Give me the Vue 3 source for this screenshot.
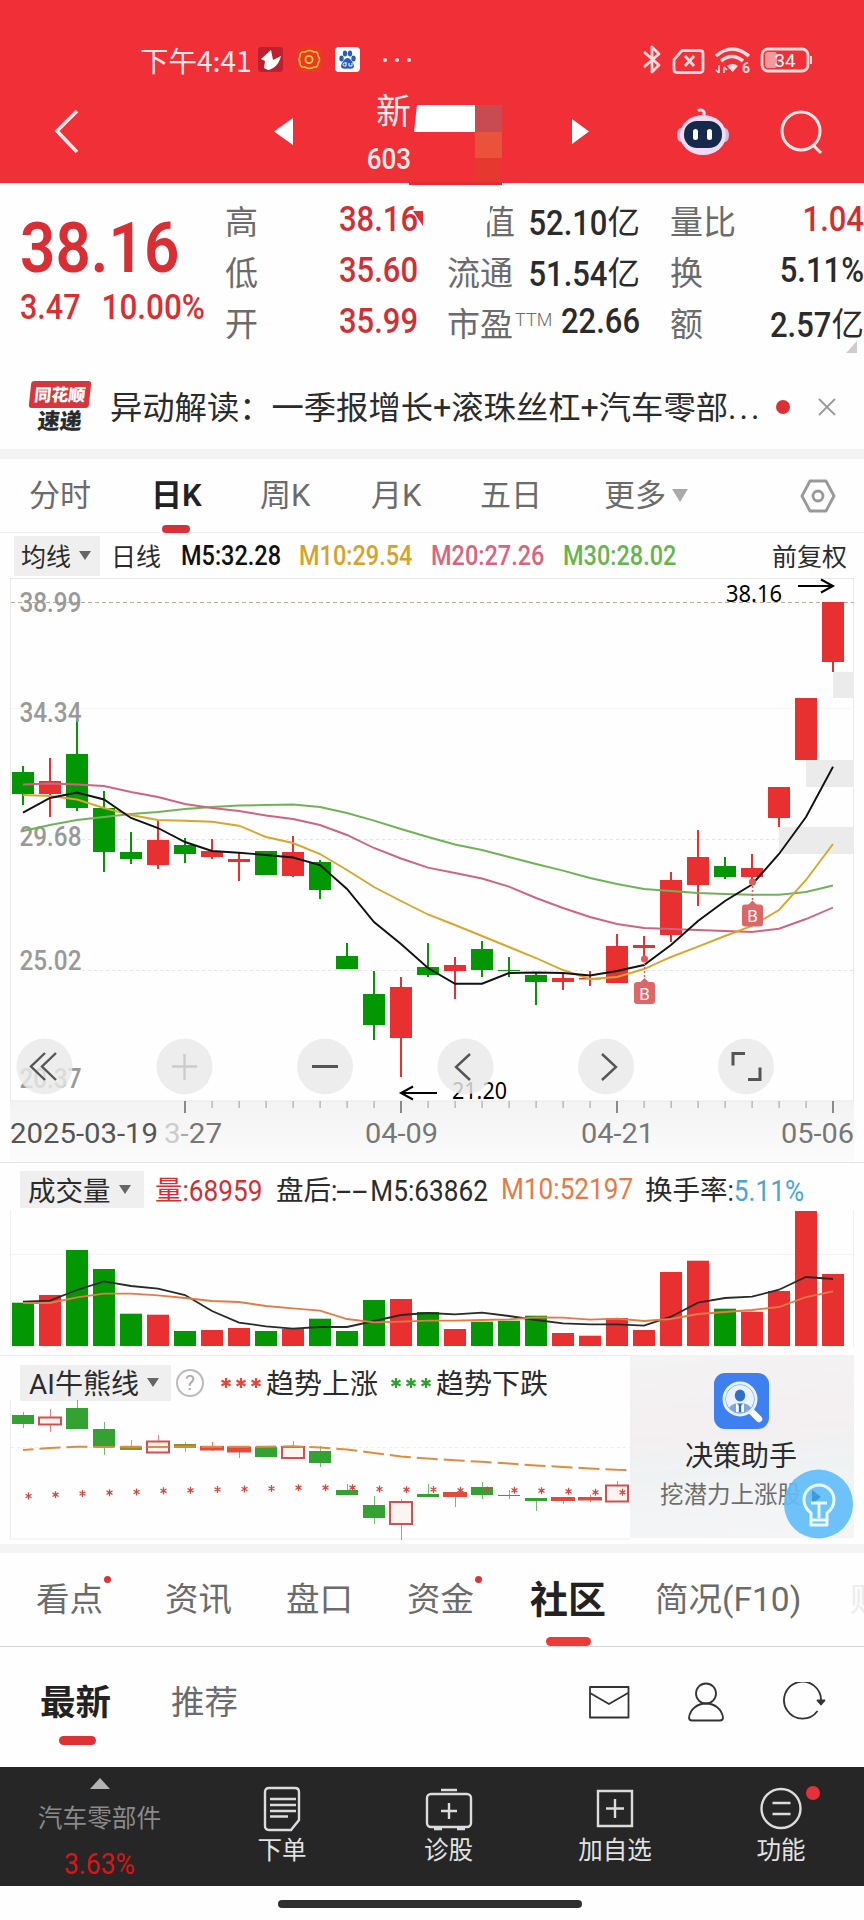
<script setup>
import { ref, computed } from 'vue'

const RED = '#e83030'
const GREEN = '#039803'

const periods = ['分时', '日K', '周K', '月K', '五日', '更多']
const activePeriod = ref('日K')

const sections = [
  { name: '看点', dot: true },
  { name: '资讯' },
  { name: '盘口' },
  { name: '资金', dot: true },
  { name: '社区' },
  { name: '简况(F10)' },
  { name: '财' },
]
const activeSection = ref('社区')

// x of the candle with index i
const cx = (i) => 23 + 27 * i

// [up, bodyTop, bodyBottom, high, low]
const candles = [
  [0, 772, 794, 766, 805], [1, 781, 794, 758, 817], [0, 754, 808, 720, 811],
  [0, 808, 852, 791, 872], [0, 852, 859, 832, 864], [1, 840, 865, 821, 869],
  [0, 845, 854, 838, 863], [1, 851, 857, 839, 859], [1, 859, 862, 853, 881],
  [0, 851, 875, 851, 875], [1, 852, 876, 836, 877], [0, 862, 890, 860, 899],
  [0, 956, 969, 943, 969], [0, 994, 1025, 971, 1040], [1, 987, 1038, 977, 1077],
  [0, 967, 975, 943, 977], [1, 965, 971, 957, 999], [0, 949, 970, 941, 977],
  [0, 970, 971, 957, 977], [0, 975, 982, 973, 1005], [1, 978, 982, 973, 990],
  [1, 978, 979.5, 971, 986], [1, 946, 983, 934, 983], [1, 945, 948, 936, 959],
  [1, 880, 935, 872, 942], [1, 857, 885, 830, 906], [0, 866, 877, 857, 879],
  [1, 868, 877, 854, 883], [1, 787, 818, 787, 827], [1, 698, 760, 698, 760],
  [1, 602, 662, 602, 672],
]

const toPoints = (ys) => ys.map((y, i) => `${cx(i)},${y}`).join(' ')

const averages = [
  { color: '#6fb356', ys: [831, 825, 820, 817, 814, 812, 809, 807, 805.5, 805, 804.5, 807, 813, 820.7, 829, 837, 844.5, 850, 857, 864, 870.7, 878, 884, 889, 891, 893, 894, 894.7, 894.7, 892, 885.5] },
  { color: '#cf6480', ys: [784.5, 783.5, 784.5, 786, 792, 797, 804, 808, 811, 815.5, 819, 825, 835, 848, 858.5, 867.7, 873, 878.5, 886.7, 898, 908, 917, 924, 928, 929, 930, 931, 932, 928.7, 919, 907.5] },
  { color: '#d8a62c', ys: [795, 796, 799.5, 808, 815, 820, 820.7, 821.7, 825.7, 837, 843, 854, 870, 887, 901, 914.5, 925, 936, 947, 958, 970, 979, 977, 969, 957, 946.7, 936, 926, 910, 880, 844] },
  { color: '#111', ys: [812.7, 798, 792.5, 799.5, 818, 828, 842, 851, 852.7, 855, 857.5, 865, 889, 922, 944, 968, 983.7, 983.7, 973, 972.5, 973, 975.5, 971, 965, 945, 921, 901, 884.5, 854, 817, 766.7] },
]

const priceLabels = [
  ['38.99', 611.5], ['34.34', 722], ['29.68', 846], ['25.02', 970], ['20.37', 1088],
]

const ticks = computed(() => {
  const list = []
  for (let i = 6; i <= 30; i++) list.push({ x: cx(i), major: [6, 14, 22, 30].includes(i) })
  return list
})

// volume bar tops, coloured like the candle of the same day
const volumes = [1302.7, 1295, 1250, 1269, 1313.7, 1314.7, 1331, 1330, 1328, 1331, 1328.7, 1318.7, 1331, 1300, 1299, 1312, 1329, 1321.7, 1320.7, 1315.7, 1333, 1335.7, 1318, 1330, 1272, 1260.7, 1308.7, 1311.7, 1291, 1211, 1274]
const volM5 = [1301.7, 1300.7, 1290, 1281.3, 1286, 1288.7, 1295, 1311, 1322.7, 1326.3, 1328.7, 1327, 1327, 1321, 1315, 1313, 1314.3, 1312.7, 1316, 1320, 1323.3, 1324.3, 1324.3, 1325.7, 1316.7, 1302.7, 1298, 1296.7, 1289.7, 1277, 1279]
const volM10 = [1303, 1303, 1297.3, 1293.7, 1293.7, 1295.3, 1298, 1301, 1302, 1306, 1308.3, 1310.7, 1319, 1322.3, 1321.7, 1320.7, 1320.7, 1320, 1319.3, 1317.3, 1317.7, 1319.7, 1318.7, 1321, 1319, 1314, 1312, 1310, 1307, 1297, 1291.3]

// [type, top, bottom, high, low]
const aiCandles = [
  ['g', 1415, 1424, 1412, 1428], ['h', 1417.5, 1424.5, 1409, 1432], ['g', 1408, 1429, 1400, 1429],
  ['g', 1429, 1447, 1422, 1455], ['o', 1446.5, 1450, 1440, 1450], ['h', 1441.5, 1452.5, 1435, 1453],
  ['o', 1444, 1448, 1442, 1452], ['r', 1446, 1450.5, 1442, 1451], ['r', 1446.5, 1452.5, 1446, 1458],
  ['g', 1447, 1457, 1447, 1457], ['h', 1447, 1458, 1441, 1458], ['g', 1451, 1463, 1446, 1467],
  ['g', 1490, 1495, 1484, 1495], ['g', 1505, 1518, 1496, 1524], ['h', 1502, 1524, 1499, 1540],
  ['g', 1494, 1497, 1484, 1497], ['r', 1492, 1497, 1492, 1507], ['g', 1487, 1495, 1482, 1499],
  ['g', 1495, 1496, 1490, 1499], ['g', 1498, 1501, 1498, 1511], ['r', 1497, 1501, 1497, 1504],
  ['r', 1497, 1500.5, 1495, 1502], ['h', 1485.5, 1501.5, 1481, 1502],
]
const aiColors = { g: '#33a233', r: '#df4c3c', h: '#d0504f', o: '#8f8f28' }
const trend = [1450, 1448, 1446.7, 1447, 1446.7, 1447, 1446.7, 1446.7, 1446.7, 1446.7, 1446.3, 1447.5, 1449.5, 1453, 1456.5, 1458.5, 1460.3, 1461.8, 1463.5, 1465.5, 1467, 1468.5, 1469.8]
const stars = [1496, 1494.7, 1493.5, 1492.7, 1492, 1490.8, 1490.3, 1489.5, 1489, 1488.5, 1487.7, 1487.7, 1487.7, 1489, 1489.7, 1489.5, 1490.3, 1490, 1490.3, 1490.7, 1491.3, 1492.3, 1492.3]
</script>

<template>
  <div class="page">
    <header class="header">
      <div class="status">
        <span class="time">下午4:41</span>
        <svg class="app-icon" viewBox="0 0 25 25">
          <rect width="25" height="25" rx="3" fill="#bd2130" />
          <path d="M13 3 3 12l4 2-1 7 4 2c6-1 11-6 13-14l-8 4z" fill="#fff" />
        </svg>
        <svg class="app-icon" viewBox="0 0 25 25">
          <rect width="25" height="25" rx="3" fill="#ec3a1c" />
          <path d="M3 9c0-3 2-5 5-4 3-2 6-2 9 0 3-1 4 1 4 4 2 2 2 5 0 7 0 3-1 5-4 4-3 2-6 2-9 0-3 1-5-1-5-4-1-2-1-5 0-7z" fill="none" stroke="#f2c94c" stroke-width="1.600" />
          <circle cx="12" cy="12.500" r="3.600" fill="none" stroke="#f2c94c" stroke-width="1.800" />
        </svg>
        <svg class="app-icon" viewBox="0 0 25 25">
          <rect width="25" height="25" rx="4" fill="#fff" />
          <g fill="#2a5db8">
            <ellipse cx="6.500" cy="11.500" rx="2.200" ry="3" />
            <ellipse cx="10" cy="6.500" rx="2.200" ry="3" />
            <ellipse cx="15" cy="6.500" rx="2.200" ry="3" />
            <ellipse cx="18.500" cy="11.500" rx="2.200" ry="3" />
            <path d="M12.500 11c3 0 6 5 6.500 8 0 3-3 3-6.500 2.500C9 22 6 22 6 19c.5-3 3.500-8 6.500-8z" />
          </g>
          <path d="M11 15v4h-1.500a1.500 1.500 0 0 1 0-3H11M14 16v3h3v-3" fill="none" stroke="#fff" />
        </svg>
        <i class="dots"><b></b><b></b><b></b></i>
        <svg class="status-right" width="170" height="32" viewBox="642 44 170 32" fill="none" stroke="#fbdcdc" stroke-width="2.800">
          <path d="M644 52l15 13-7 7V47l7 7-15 13" stroke-linejoin="round" />
          <path d="M682 50.500h18q3 0 3 3v16q0 3-3 3h-23q-3 0-3-3v-10z" />
          <path d="M685 56l9 10m0-10-9 10" />
          <path d="M716 56q16-14 33 0M721 61q11-9 22 0" stroke-width="3.600" />
          <path d="M727 66q6-4 11 0l-5.500 6z" fill="#fbdcdc" stroke="none" />
          <path d="M719 65v8m-3-3 3 3M724 73v-6m3 3-3-3" stroke-width="1.600" />
          <text x="742" y="73" font-size="14" font-weight="700" fill="#fbdcdc" stroke="none">6</text>
          <rect x="762" y="49" width="46" height="22" rx="6" />
          <rect x="765" y="52" width="12" height="16" rx="3" fill="#f59a9c" stroke="none" />
          <path d="M811.500 56v8" />
          <text x="785" y="67" font-size="19" text-anchor="middle" fill="#fff" stroke="none" textLength="21" lengthAdjust="spacingAndGlyphs">34</text>
        </svg>
      </div>
      <nav class="nav">
        <svg class="back" width="30" height="46" viewBox="0 0 30 46"><path d="M26 2 6 22l20 21" fill="none" stroke="#fde8e8" stroke-width="3.600" /></svg>
        <svg class="arrow" width="20" height="28" viewBox="0 0 20 28"><path d="M19 0v27L0 13.500z" fill="#fff" /></svg>
        <div class="title">
          <div class="title-text">
            <span class="name">新</span>
            <span class="n code">603</span>
          </div>
          <svg class="mosaic" width="93" height="101" viewBox="409 84 93 101">
            <path d="M417 105h58v27h-61z" fill="#fff" />
            <rect x="475" y="105" width="27" height="27" fill="#c94b52" />
            <rect x="475" y="132" width="27" height="26" fill="#e9523b" />
            <rect x="475" y="158" width="27" height="25" fill="#e73830" />
            <rect x="409" y="182" width="93" height="3" fill="#df2f33" />
          </svg>
        </div>
        <svg class="arrow" width="20" height="28" viewBox="0 0 20 28"><path d="M0 1v25l17-12.500z" fill="#fff" /></svg>
        <svg class="robot" width="54" height="50" viewBox="0 0 54 50">
          <path d="M26 9c4-4-2-8-5-5" fill="none" stroke="#f3e3f5" stroke-width="3" />
          <ellipse cx="4" cy="28" rx="4" ry="7" fill="#cdbbe0" />
          <ellipse cx="48" cy="28" rx="4" ry="7" fill="#cdbbe0" />
          <ellipse cx="26" cy="28" rx="23" ry="20" fill="#eedcf3" />
          <rect x="7" y="14" width="38" height="27" rx="13" fill="#17294b" />
          <rect x="16" y="22" width="5" height="11" rx="2.500" fill="#fff" />
          <rect x="30" y="22" width="5" height="11" rx="2.500" fill="#fff" />
        </svg>
        <svg width="44" height="46" viewBox="0 0 44 46" fill="none" stroke="#fde8e8" stroke-width="3">
          <circle cx="22" cy="22" r="19" />
          <path d="M34 36l8 8" />
        </svg>
      </nav>
    </header>

    <section class="quote">
      <div class="price">
        <div class="n last">38.16</div>
        <div class="change"><span class="n">3.47</span><span class="n pct">10.00%</span></div>
      </div>
      <div class="stats">
        <div class="stat"><span>高</span><b class="n red">38.16</b></div>
        <div class="stat"><span>低</span><b class="n red">35.60</b></div>
        <div class="stat"><span>开</span><b class="n red">35.99</b></div>
      </div>
      <div class="stats">
        <div class="stat"><svg class="chip" width="11" height="16" viewBox="0 0 11 16"><path d="M0 1h10v15z" fill="#d92f35" /></svg><span class="cut">值</span><div><b class="n">52.10</b><em>亿</em></div></div>
        <div class="stat"><span>流通</span><div><b class="n">51.54</b><em>亿</em></div></div>
        <div class="stat"><span>市盈<sup>TTM</sup></span><b class="n">22.66</b></div>
      </div>
      <div class="stats">
        <div class="stat"><span>量比</span><b class="n red">1.04</b></div>
        <div class="stat"><span>换</span><b class="n">5.11%</b></div>
        <div class="stat"><span>额</span><div><b class="n">2.57</b><em>亿</em></div></div>
        <i class="corner"></i>
      </div>
    </section>

    <section class="notice">
      <div class="logo">
        <div class="logo-top">同花顺</div>
        <div class="logo-bottom">速递</div>
      </div>
      <span class="notice-text">异动解读：一季报增长+滚珠丝杠+汽车零部<span class="more">...</span></span>
      <i class="notice-dot"></i>
      <svg width="20" height="18" viewBox="0 0 20 18"><path d="M2 1l16 16M18 1 2 17" stroke="#999" stroke-width="1.800" /></svg>
    </section>

    <nav class="periods">
      <span v-for="p in periods" :key="p" :class="{ on: p === activePeriod }" @click="activePeriod = p">{{ p }}<i v-if="p === '更多'" class="caret"></i></span>
      <svg width="36" height="34" viewBox="0 0 36 34" fill="none" stroke="#999" stroke-width="2.800">
        <path d="M10 2h16l8 15-8 15H10L2 17z" stroke-linejoin="round" />
        <circle cx="18" cy="17" r="5" />
      </svg>
    </nav>

    <div class="ma">
      <span class="select">均线<i class="caret dark"></i></span>
      <span class="ma-day">日线</span>
      <b class="n m5">M5:32.28</b>
      <b class="n m10">M10:29.54</b>
      <b class="n m20">M20:27.26</b>
      <b class="n m30">M30:28.02</b>
      <span class="adjust">前复权</span>
    </div>

    <svg class="chart" width="864" height="584" viewBox="0 578 864 584">
      <defs>
        <linearGradient id="axisBg" x1="0" y1="0" x2="0" y2="1">
          <stop offset="0" stop-color="#f3f3f3" />
          <stop offset="1" stop-color="#fbfbfb" />
        </linearGradient>
      </defs>
      <rect x="10" y="1101" width="844" height="61" fill="url(#axisBg)" />
      <rect x="10.500" y="578.500" width="843" height="522.500" fill="#fefefe" stroke="#e9e9e9" />
      <path d="M11 602.500h843" stroke="#b9ab98" stroke-dasharray="4 3" />
      <path d="M11 708.500h843" stroke="#f6f6f6" />
      <path d="M82 839.500h772M82 970.500h772" stroke="#e4e4e4" stroke-dasharray="3 3" />
      <g fill="#ebebeb">
        <rect x="833" y="672" width="21" height="26" />
        <rect x="806" y="760" width="48" height="27" />
        <rect x="779" y="827" width="75" height="27" />
      </g>
      <g v-for="(c, i) in candles" :key="i" :fill="c[0] ? RED : GREEN">
        <rect :x="cx(i) - 1" :y="c[3]" width="2" :height="c[4] - c[3]" />
        <rect :x="cx(i) - 11" :y="c[1]" width="22" :height="c[2] - c[1]" />
      </g>
      <text v-for="l in priceLabels" :key="l[0]" class="axis" x="19.500" :y="l[1]" textLength="62" lengthAdjust="spacingAndGlyphs">{{ l[0] }}</text>
      <polyline v-for="a in averages" :key="a.color" :points="toPoints(a.ys)" fill="none" :stroke="a.color" stroke-width="1.900" />

      <g v-for="m in [[644.5, 959, 982], [752.5, 882, 904.5]]" :key="m[0]">
        <circle :cx="m[0]" :cy="m[1]" r="3.500" fill="#de5b5b" />
        <path :d="`M${m[0]} ${m[1]}V${m[2]}`" stroke="#de5b5b" stroke-width="1.500" stroke-dasharray="2 2" />
        <path :d="`M${m[0] - 5} ${m[2] + 1}l5-5 5 5z`" fill="#dd6666" />
        <rect :x="m[0] - 10.500" :y="m[2]" width="21" height="22" rx="3" fill="#dd6666" />
        <text :x="m[0]" :y="m[2] + 17.500" class="mark">B</text>
      </g>

      <text x="726" y="602" class="tip" textLength="56" lengthAdjust="spacingAndGlyphs">38.16</text>
      <path d="M798 586h34M821 579.500l12 6.500-12 6.500" fill="none" stroke="#000" stroke-width="2" />
      <text x="452" y="1099" class="tip" textLength="55" lengthAdjust="spacingAndGlyphs">21.20</text>
      <path d="M437 1093h-35M413 1086.500l-12 6.500 12 6.500" fill="none" stroke="#000" stroke-width="2" />

      <circle v-for="x in [44.5, 184.5, 325, 465.5, 606, 746]" :key="x" :cx="x" cy="1066.500" r="28" fill="#e9e9e9" fill-opacity=".82" />
      <g fill="none" stroke="#555" stroke-width="2.400">
        <path d="M45 1053l-14 13.500 14 13.500M56 1053l-14 13.500 14 13.500" />
        <path d="M172 1066.500h25M184.500 1054v26" stroke="#ccc" />
        <path d="M312 1066.500h26" stroke-width="3" />
        <path d="M470 1054l-14 13 14 13M602 1054l14 13-14 13" />
        <path d="M745 1053.500h-12v12M748 1079.500h12v-12" stroke-width="3" />
      </g>

      <g v-for="t in ticks" :key="t.x">
        <rect :x="t.x - (t.major ? 1 : 0.5)" y="1101" :width="t.major ? 2 : 1.2" :height="t.major ? 12 : 7" :fill="t.major ? '#8a8a8a' : '#aaa'" />
      </g>
      <g class="date">
        <text x="10" y="1142.500" textLength="148" lengthAdjust="spacingAndGlyphs" fill="#555">2025-03-19</text>
        <text x="164" y="1142.500" textLength="58" lengthAdjust="spacingAndGlyphs"><tspan fill="#ccc">3</tspan><tspan fill="#aaa">-</tspan>27</text>
        <text x="365" y="1142.500" textLength="73" lengthAdjust="spacingAndGlyphs">04-09</text>
        <text x="581" y="1142.500" textLength="73" lengthAdjust="spacingAndGlyphs">04-21</text>
        <text x="781" y="1142.500" textLength="73" lengthAdjust="spacingAndGlyphs">05-06</text>
      </g>
    </svg>

    <section class="volume">
      <div class="volume-head">
        <span class="select">成交量<i class="caret dark"></i></span>
        <span class="v1">量<b class="n">:68959</b></span>
        <span class="v2">盘后<b class="n">:<s>--</s>M5:63862</b></span>
        <span class="v3"><b class="n">M10:52197</b></span>
        <span>换手率<b class="n">:<u>5.11%</u></b></span>
      </div>
      <svg width="864" height="138" viewBox="0 1210 864 138">
        <path d="M11 1254.500h843" stroke="#f3f3f3" />
        <path d="M10.500 1210v137M853.500 1210v137" stroke="#efefef" />
        <rect v-for="(v, i) in volumes" :key="i" :x="cx(i) - 11" :y="v" width="22" :height="1346 - v" :fill="candles[i][0] ? RED : GREEN" />
        <polyline :points="toPoints(volM5)" fill="none" stroke="#2a2a2a" stroke-width="1.800" />
        <polyline :points="toPoints(volM10)" fill="none" stroke="#e57a45" stroke-width="1.800" />
      </svg>
    </section>

    <section class="ai">
      <div class="ai-chart">
        <div class="ai-head">
          <span class="select">AI牛熊线<i class="caret dark"></i></span>
          <span class="help">?</span>
          <svg width="42" height="14" viewBox="0 0 42 14" stroke="#df4a3c" stroke-width="2.200"><path v-for="k in [6, 21, 36]" :key="k" :d="`M${k} 2v10M${k - 4.500} 4.500l9 5M${k + 4.500} 4.500l-9 5`" /></svg>
          <span class="up">趋势上涨</span>
          <svg width="42" height="14" viewBox="0 0 42 14" stroke="#2fa02f" stroke-width="2.200"><path v-for="k in [6, 21, 36]" :key="k" :d="`M${k} 2v10M${k - 4.500} 4.500l9 5M${k + 4.500} 4.500l-9 5`" /></svg>
          <span class="down">趋势下跌</span>
        </div>
        <svg class="ai-svg" width="630" height="144" viewBox="0 1400 630 144">
          <path d="M10.500 1400v139h620" stroke="#ececec" fill="none" />
          <path d="M11 1447.500h621" stroke="#ededed" stroke-dasharray="3 3" />
          <g v-for="(c, i) in aiCandles" :key="i">
            <rect :x="cx(i)" :y="c[3]" width="1" :height="c[4] - c[3]" :fill="aiColors[c[0]]" opacity=".7" />
            <rect v-if="c[0] === 'h'" :x="cx(i) - 11" :y="c[1]" width="22" :height="c[2] - c[1]" fill="#fbf4f1" :stroke="aiColors.h" stroke-width="2" />
            <rect v-else :x="cx(i) - (c[0] === 'r' ? 12 : 11)" :y="c[1]" :width="c[0] === 'r' ? 24 : 22" :height="c[2] - c[1]" :fill="aiColors[c[0]]" />
          </g>
          <polyline :points="toPoints(trend) + ' 630,1470'" fill="none" stroke="#e08c3c" stroke-width="2" stroke-dasharray="21 6" stroke-dashoffset="10.500" />
          <path v-for="(y, i) in stars" :key="i" :d="`M${cx(i) + 5.500} ${y - 3.500}v7M${cx(i) + 2.500} ${y - 1.800}l6 3.600M${cx(i) + 8.500} ${y - 1.800}l-6 3.600`" stroke="#d24a45" stroke-width="1.300" />
        </svg>
      </div>
      <aside class="helper">
        <svg width="55" height="56" viewBox="0 0 55 56">
          <rect width="55" height="56" rx="11" fill="#3f80f1" />
          <path d="M38 39l7 7" stroke="#fff" stroke-width="6.500" stroke-linecap="round" />
          <circle cx="26" cy="26" r="16" fill="#4f8df3" stroke="#e8f3ff" stroke-width="3" />
          <circle cx="26" cy="26" r="14" fill="#e9f3ff" />
          <path d="M15 35q3-5 11-5t11 5q-5 5-11 5t-11-5z" fill="#7fa6d8" />
          <ellipse cx="26" cy="22.500" rx="5.200" ry="6" fill="#2d6fc9" />
          <path d="M22 30l4 4 4-4v9h-8z" fill="#fff" />
          <path d="M26 31v8" stroke="#2d6fc9" stroke-width="2.400" />
        </svg>
        <strong>决策助手</strong>
        <small>挖潜力上涨股</small>
        <svg class="bulb" width="69" height="70" viewBox="0 0 69 70">
          <circle cx="34.500" cy="35" r="34.500" fill="#62bdf9" fill-opacity=".93" />
          <path d="M28 21l9 7-9 7z" fill="#3c9ad8" />
          <path d="M27 56V44c-4-3-7-8-7-13a15 15 0 0 1 30 0c0 5-3 10-7 13v12zM27 51h16" fill="none" stroke="#eafaff" stroke-width="3" stroke-linejoin="round" />
          <path d="M27 34h16M35 34v15" stroke="#eafaff" stroke-width="3" />
        </svg>
      </aside>
    </section>

    <nav class="sections">
      <span v-for="s in sections" :key="s.name" :class="{ on: s.name === activeSection }" @click="activeSection = s.name">{{ s.name }}<i v-if="s.dot" class="badge"></i></span>
    </nav>

    <div class="feed">
      <span class="on">最新</span>
      <span>推荐</span>
      <svg width="42" height="40" viewBox="588 1682 42 40"><path d="M590 1687h38.500v30.500H590zM590 1693l19 11 19-11" /></svg>
      <svg width="38" height="40" viewBox="688 1682 38 40"><ellipse cx="706" cy="1693.500" rx="10" ry="10" /><path d="M706 1703.500c-9 0-16 6-17 14q0 3 3 3h28q3 0 3-3c-1-8-8-14-17-14z" /></svg>
      <svg width="44" height="40" viewBox="782 1682 44 40"><path d="M817.500 1711a18.500 18.500 0 1 1 3.500-10" /><path d="M817.500 1700.500h7l-3.500 4z" fill="#333" /></svg>
    </div>

    <footer class="bar">
      <div class="sector">
        <i></i>
        <span>汽车零部件</span>
        <b class="n">3.63%</b>
      </div>
      <div class="item">
        <svg width="48" height="46" viewBox="0 0 48 46"><path d="M11 2h26q4 0 4 4v28l-8 10H11q-4 0-4-4V6q0-4 4-4zM12 13h26M12 19h26M12 25h26M12 30.500h18" /></svg>
        <span>下单</span>
      </div>
      <div class="item">
        <svg width="48" height="46" viewBox="0 0 48 46"><rect x="2" y="8" width="44" height="33" rx="4" /><path d="M16 4h16M24 17v16M16 25h16M9 43h8M32 43h8" /></svg>
        <span>诊股</span>
      </div>
      <div class="item">
        <svg width="48" height="46" viewBox="0 0 48 46"><path d="M7 5h34v35H7zM24 13v19M15 22.500h18" /></svg>
        <span>加自选</span>
      </div>
      <div class="item">
        <svg width="48" height="46" viewBox="0 0 48 46"><circle cx="24" cy="22.500" r="19.500" /><path d="M15.500 17h18M15.500 28h18" /></svg>
        <i class="red-dot"></i>
        <span>功能</span>
      </div>
    </footer>
    <div class="home"><i></i></div>
  </div>
</template>

<style>
body {
  margin: 0;
  background: #fff;
}
</style>

<style scoped>
.page {
  width: 864px;
  height: 1920px;
  overflow: hidden;
  background: #fefefe;
  font-family: Roboto, "Noto Sans CJK SC", sans-serif;
  color: #2b2b2b;
  white-space: nowrap;
}

.page * {
  box-sizing: border-box;
}

svg {
  display: block;
  flex: none;
}

i, em {
  font-style: normal;
}

/* digits are a little taller than the stock face */
.n {
  display: inline-block;
  font-weight: 500;
  transform: scaleY(1.14);
}

.red {
  color: #cf3036;
}

.caret {
  display: inline-block;
  border: 8px solid transparent;
  border-top: 13px solid #aaa;
  border-bottom: 0;
  margin-left: 6px;
  vertical-align: 4px;
}

.caret.dark {
  border-width: 9px 6.5px 0;
  border-top-color: #666;
  margin: 2px 0 0 8px;
}

.select {
  display: flex;
  align-items: center;
  background: #efefef;
}

/* header */
.header {
  height: 183px;
  padding-top: 36px;
  background: #f12f37;
}

.status {
  display: flex;
  align-items: center;
  height: 47px;
  margin-bottom: 1px;
  padding-left: 140px;
}

.time {
  width: 118px;
  font-size: 28.5px;
  line-height: 40px;
  color: #fdeaea;
  font-family: "Noto Sans CJK SC", sans-serif;
  letter-spacing: -0.1px;
}

.app-icon {
  width: 25px;
  height: 25px;
  margin-right: 13.500px;
}

.dots {
  display: flex;
  gap: 8px;
  margin-left: 9px;
}

.dots b {
  width: 4px;
  height: 4px;
  border-radius: 50%;
  background: #fde0e0;
}

.status-right {
  margin-left: auto;
  margin-right: 52px;
}

.nav {
  display: grid;
  grid-template-columns: 223px 93px 205px 105px 102px 50px;
  align-items: center;
  height: 99px;
  padding-left: 51px;
}

.nav > svg {
  margin-bottom: 5px;
}

.title {
  display: flex;
  align-self: start;
}

.title-text {
  display: flex;
  flex-direction: column;
  align-items: flex-end;
  width: 44px;
  margin-right: -2px;
  color: #fdeaea;
}

.name {
  height: 54px;
  padding-top: 2px;
  line-height: 54px;
  font-size: 35px;
}

.code {
  line-height: 42px;
  font-size: 26px;
}

/* quote */
.quote {
  display: grid;
  grid-template-columns: 225px 193px 193px 194px;
  height: 187px;
}

.quote .stats + .stats {
  margin-left: 29px;
  margin-right: -29px;
}

.quote .stats:last-child {
  margin-left: 59px;
  margin-right: -59px;
}

.price {
  padding: 30px 0 0 20px;
  color: #d92e34;
}

.last {
  display: block;
  font-size: 62px;
  font-weight: 600;
  line-height: 70px;
}

.change {
  margin-top: 7px;
  font-size: 30.5px;
  line-height: 36px;
}

.pct {
  margin-left: 21px;
  font-size: 31.5px;
}

.stats {
  padding-top: 11px;
}

.stat {
  display: flex;
  align-items: center;
  justify-content: space-between;
  position: relative;
  height: 51px;
  font-size: 33px;
  color: #6b6b6b;
}

.stat .n {
  font-size: 31px;
}

.stat .n:not(.red),
.stat em {
  color: #2b2b2b;
}

.stat em {
  font-size: 32.5px;
}

.stat sup {
  font-size: 18px;
  font-weight: 300;
  line-height: 1;
  vertical-align: 10px;
  margin-left: 2px;
}

.cut {
  margin-left: 35px;
  clip-path: polygon(24% 0, 100% 0, 100% 100%, 14% 100%, 14% 60%, 24% 50%);
}

.chip {
  position: absolute;
  left: -34px;
  top: 16px;
}

.corner {
  display: block;
  width: 11px;
  height: 12px;
  margin: -6px 7px 0 auto;
  background: #ccc;
  clip-path: polygon(100% 0, 100% 100%, 0 100%);
}

/* notice */
.notice {
  display: flex;
  align-items: center;
  height: 89px;
  padding: 0 0 6px 29px;
  border-bottom: 10px solid #f3f3f3;
}

.logo {
  width: 60px;
  margin-right: 20px;
  margin-left: 1px;
  text-align: center;
  font-family: "Noto Sans CJK SC", sans-serif;
  font-weight: 900;
  line-height: 1;
}

.logo-top {
  height: 27px;
  line-height: 25px;
  font-size: 17px;
  color: #fff;
  background: #d9353b;
  border-radius: 3px;
  transform: skewX(-6deg);
}

.logo-bottom {
  height: 24px;
  line-height: 23px;
  font-size: 22px;
  transform: skewX(-6deg);
}

.notice-text {
  width: 666px;
  padding-bottom: 4px;
  font-size: 32.3px;
}

.more {
  letter-spacing: 3px;
}

.notice-dot {
  width: 14px;
  height: 14px;
  margin-right: 27px;
  border-radius: 50%;
  background: #dc3035;
}

/* periods */
.periods {
  display: grid;
  grid-template-columns: 122px 109px 111px 109px 124px 196px 36px;
  align-items: center;
  height: 74px;
  padding-left: 29px;
  border-bottom: 1px solid #f1f1f1;
  font-size: 31px;
  color: #6b6b6b;
}

.periods span {
  position: relative;
  line-height: 74px;
}

.periods .on {
  color: #222;
  font-weight: 600;
}

.periods .on::after {
  content: "";
  position: absolute;
  left: 11px;
  bottom: 0;
  width: 28px;
  height: 8px;
  border-radius: 4px;
  background: #d93036;
}

/* moving averages row */
.ma {
  display: flex;
  align-items: center;
  height: 45px;
  padding-left: 14px;
  font-size: 25px;
}

.ma .select {
  width: 86px;
  height: 40px;
  margin-right: 11px;
  padding: 0 0 2px 7px;
}

.ma .n {
  font-size: 23.5px;
}

.ma-day { width: 70px; padding-bottom: 2px; }
.adjust { padding-bottom: 2px; }
.m5 { width: 118px; color: #111; }
.m10 { width: 132px; color: #d5a32a; }
.m20 { width: 132px; color: #d8657f; }
.m30 { width: 209px; color: #67b44d; }

.chart {
  overflow: visible;
}

.axis {
  font-size: 28px;
  fill: #999;
  font-weight: 500;
}

.mark {
  font-size: 17px;
  fill: #fff;
  text-anchor: middle;
}

.tip {
  font-family: "Noto Sans", sans-serif;
  font-size: 24px;
  fill: #000;
}

.date {
  font-size: 28px;
  fill: #777;
}

/* volume */
.volume {
  height: 186px;
  border-top: 1px solid #e4e4e4;
}

.volume-head {
  display: flex;
  align-items: center;
  height: 47px;
  padding: 6px 0 0 20px;
  font-size: 27.5px;
}

.volume-head span:not(.select) {
  padding-bottom: 3px;
}

.volume-head .select {
  width: 124px;
  height: 37px;
  margin-right: 11px;
  padding: 0 0 2px 8px;
}

.volume-head .n {
  font-size: 26.2px;
  font-weight: 400;
}

.v1 { width: 121px; color: #cf3036; }
.v2 { width: 225px; }
.v3 { width: 144px; color: #e57a45; }

.volume-head u {
  text-decoration: none;
  color: #4aa5d3;
}

/* stretched placeholder dashes */
.volume-head s {
  display: inline-block;
  width: 33px;
  padding-left: 1px;
  text-decoration: none;
  transform: scaleX(2.1);
  transform-origin: left;
  letter-spacing: 0.5px;
  margin-left: -3px;
  margin-right: 3px;
}

/* ai */
.ai {
  display: flex;
  height: 205px;
  padding-top: 7px;
  border-bottom: 9px solid #f4f4f4;
}

.ai-chart {
  width: 630px;
  border-top: 1px solid #ececec;
}

.ai-head {
  display: flex;
  align-items: center;
  height: 44px;
  padding: 9px 0 0 20px;
  font-size: 28px;
}

.ai-head > span:not(.help) {
  padding-bottom: 2px;
}

.ai-head .select {
  width: 151px;
  height: 36px;
  margin-right: 5px;
  padding-left: 9px;
}

.help {
  width: 28px;
  height: 28px;
  margin-right: 16px;
  border: 2px solid #bbb;
  border-radius: 50%;
  font-size: 21px;
  line-height: 24px;
  text-align: center;
  color: #aaa;
}

.up {
  margin: 0 12px 0 4px;
}

.down {
  margin-left: 4px;
}

.helper {
  position: relative;
  display: flex;
  flex-direction: column;
  align-items: center;
  width: 224px;
  height: 183px;
  padding: 18px 2px 0 0;
  background: linear-gradient(175deg, #f3f3f4 0%, #f4eff0 40%, #eff2f3 60%, #f5f5f6 100%);
}

.helper strong {
  height: 43px;
  margin-top: 8px;
  line-height: 40px;
  font-size: 28px;
  font-weight: 400;
}

.helper small {
  margin-right: 21px;
  font-size: 23.5px;
  line-height: 31px;
  color: #6d6d6d;
}

.bulb {
  position: absolute;
  left: 154px;
  top: 114px;
}

/* sections */
.sections {
  display: grid;
  grid-template-columns: 129px 121px 121px 123px 125px 195px 40px;
  align-items: center;
  height: 94px;
  padding-left: 36px;
  border-bottom: 1px solid #d6d6d6;
  font-size: 33.5px;
  color: #6b6b6b;
}

.sections span {
  position: relative;
  justify-self: start;
  line-height: 92px;
}

.sections span:last-child {
  color: #ececec;
}

.sections .on {
  font-size: 38px;
  font-weight: 700;
  color: #222;
}

.sections .on::after {
  content: "";
  position: absolute;
  left: 16px;
  bottom: 0;
  width: 45px;
  height: 9px;
  border-radius: 4.5px;
  background: #ee3a36;
}

.badge {
  position: absolute;
  right: -8px;
  top: 22px;
  width: 7px;
  height: 7px;
  border-radius: 50%;
  background: #d33;
}

.feed {
  display: grid;
  grid-template-columns: 131px 417px 100px 94px 44px;
  align-items: center;
  height: 120px;
  padding: 0 0 11px 40px;
  font-size: 33.5px;
  color: #6b6b6b;
}

.feed span {
  position: relative;
  justify-self: start;
  margin-bottom: 5px;
}

.feed .on {
  font-size: 35.5px;
  font-weight: 700;
  color: #222;
}

.feed .on::after {
  content: "";
  position: absolute;
  left: 19px;
  bottom: -20px;
  width: 37px;
  height: 9px;
  border-radius: 4.5px;
  background: #dc3236;
}

.feed svg {
  fill: none;
  stroke: #333;
  stroke-width: 1.8;
  stroke-linejoin: round;
}

/* bottom bar */
.bar {
  display: grid;
  grid-template-columns: 199px 166px 167px 166px 166px;
  height: 119px;
  background: #262626;
}

.sector {
  display: flex;
  flex-direction: column;
  align-items: center;
  color: #8a8a8a;
  font-size: 24.7px;
}

.sector i {
  margin-top: 11px;
  border: 10.5px solid transparent;
  border-top: 0;
  border-bottom: 11px solid #b5b5b5;
}

.sector span {
  height: 52px;
  line-height: 60px;
}

.sector b {
  font-size: 26.500px;
  font-weight: 400;
  line-height: 46px;
  color: #dc1418;
}

.item {
  position: relative;
  display: flex;
  flex-direction: column;
  align-items: center;
  padding-top: 19px;
  font-size: 24.5px;
  line-height: 38px;
  color: #e2e2e2;
}

.item svg {
  fill: none;
  stroke: #dcdcdc;
  stroke-width: 2.4;
}

.red-dot {
  position: absolute;
  left: 108px;
  top: 19px;
  width: 14px;
  height: 14px;
  border-radius: 50%;
  background: #e8303a;
}

.home {
  display: flex;
  justify-content: center;
  padding: 14px 4px 0 0;
}

.home i {
  width: 304px;
  height: 8px;
  border-radius: 4px;
  background: #2f2f2f;
}
</style>
